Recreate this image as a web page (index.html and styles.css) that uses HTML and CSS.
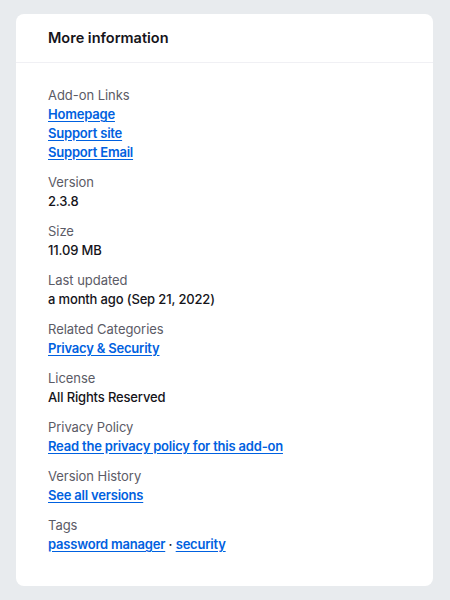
FILE: index.html
```html
<!DOCTYPE html>
<html>
<head>
<meta charset="utf-8">
<link rel="stylesheet" href="styles.css">
</head>
<body>
<section class="card">
  <header class="card-header"><h2 class="title">More information</h2></header>
  <dl class="info">
    <div class="group">
      <dt>Add-on Links</dt>
      <dd><a href="#">Homepage</a></dd>
      <dd><a href="#">Support site</a></dd>
      <dd><a href="#">Support Email</a></dd>
    </div>
    <div class="group"><dt>Version</dt><dd>2.3.8</dd></div>
    <div class="group"><dt>Size</dt><dd>11.09 MB</dd></div>
    <div class="group"><dt>Last updated</dt><dd>a month ago (Sep 21, 2022)</dd></div>
    <div class="group"><dt>Related Categories</dt><dd><a href="#">Privacy &amp; Security</a></dd></div>
    <div class="group"><dt>License</dt><dd>All Rights Reserved</dd></div>
    <div class="group"><dt>Privacy Policy</dt><dd><a href="#">Read the privacy policy for this add-on</a></dd></div>
    <div class="group"><dt>Version History</dt><dd><a href="#">See all versions</a></dd></div>
    <div class="group"><dt>Tags</dt><dd><a href="#">password manager</a> · <a href="#">security</a></dd></div>
  </dl>
</section>
</body>
</html>
```
FILE: styles.css
```css
html, body { margin: 0; padding: 0; }
body {
  background: #e8ebee;
  font-family: Inter, "Noto Sans", sans-serif;
  padding: 14px 17px 15px 16px;
}
.card {
  background: #ffffff;
  border-radius: 8px;
  overflow: hidden;
}
.card-header {
  padding: 14px 32px 14px 32px;
  border-bottom: 1px solid #f0f0f4;
  height: 20px;
}
.title {
  margin: 0;
  font-size: 14.5px;
  font-weight: 600;
  line-height: 20px;
  color: #15141a;
}
.info {
  margin: 0;
  padding: 23px 32px 32px 32px;
}
.group { margin-bottom: 11px; }
.group:last-child { margin-bottom: 0; }
dt, dd {
  margin: 0;
  font-size: 13px;
  line-height: 19px;
}
dt { color: #5b5b66; letter-spacing: -0.05px; }
dd { color: #15141a; font-weight: 500; letter-spacing: -0.15px; }
a {
  color: #0061e0;
  font-weight: 600;
  letter-spacing: -0.2px;
  text-decoration: underline;
  text-underline-offset: 2px;
}
```
